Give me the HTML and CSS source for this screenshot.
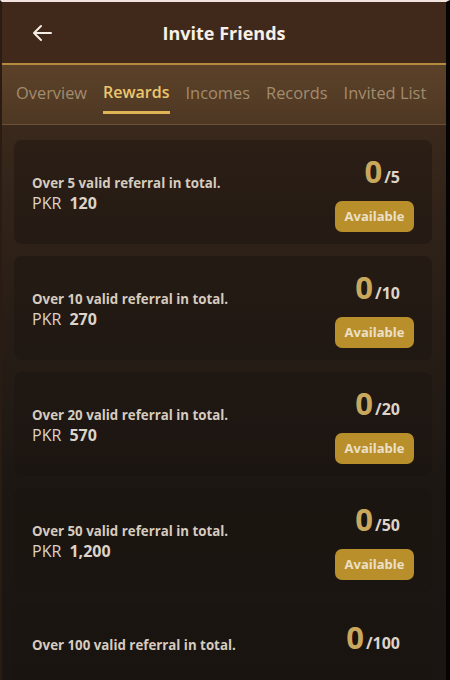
FILE: index.html
```html
<!DOCTYPE html>
<html lang="en">
<head>
    <meta charset="UTF-8">
    <meta name="viewport" content="width=device-width, initial-scale=1.0">
    <title>Invite Friends</title>
    <link rel="stylesheet" href="styles.css">
</head>
<body>
    <div class="phone">
        <header class="topbar">
            <a class="back" href="#">
                <svg width="20" height="18" viewBox="0 0 20 18" fill="none" stroke="#f4ede4" stroke-width="2" stroke-linecap="round" stroke-linejoin="round">
                    <path d="M19 9H2M9 2L2 9l7 7"/>
                </svg>
            </a>
            <h1>Invite Friends</h1>
        </header>

        <nav class="tabs">
            <a href="#">Overview</a>
            <a href="#" class="active">Rewards</a>
            <a href="#">Incomes</a>
            <a href="#">Records</a>
            <a href="#">Invited List</a>
        </nav>

        <main class="list">
            <div class="card">
                <div class="info">
                    <p class="task">Over 5 valid referral in total.</p>
                    <p class="prize">PKR <b>120</b></p>
                </div>
                <div class="side">
                    <p class="count"><span>0</span>/5</p>
                    <button class="btn">Available</button>
                </div>
            </div>
            <div class="card">
                <div class="info">
                    <p class="task">Over 10 valid referral in total.</p>
                    <p class="prize">PKR <b>270</b></p>
                </div>
                <div class="side">
                    <p class="count"><span>0</span>/10</p>
                    <button class="btn">Available</button>
                </div>
            </div>
            <div class="card">
                <div class="info">
                    <p class="task">Over 20 valid referral in total.</p>
                    <p class="prize">PKR <b>570</b></p>
                </div>
                <div class="side">
                    <p class="count"><span>0</span>/20</p>
                    <button class="btn">Available</button>
                </div>
            </div>
            <div class="card">
                <div class="info">
                    <p class="task">Over 50 valid referral in total.</p>
                    <p class="prize">PKR <b>1,200</b></p>
                </div>
                <div class="side">
                    <p class="count"><span>0</span>/50</p>
                    <button class="btn">Available</button>
                </div>
            </div>
            <div class="card last">
                <div class="info">
                    <p class="task">Over 100 valid referral in total.</p>
                </div>
                <div class="side">
                    <p class="count"><span>0</span>/100</p>
                </div>
            </div>
        </main>
    </div>
</body>
</html>
```

FILE: styles.css
```css
body {
    margin: 0;
    padding: 0;
    background-color: #000;
    font-family: "Open Sans", "Noto Sans", sans-serif;
    overflow: hidden;
}

.phone {
    width: 444px;
    height: 678px;
    border-top: 2px solid #f2e2e0;
    border-left: 2px solid #2a1c12;
    border-right: 4px solid #050403;
    background: linear-gradient(to bottom, #46301f 0%, #2e2118 35%, #1d1713 70%, #1a1512 100%);
    overflow: hidden;
}

.topbar {
    height: 61px;
    display: flex;
    align-items: center;
    justify-content: center;
    position: relative;
    background-color: #40291b;
    border-bottom: 2px solid #b48a3c;
}

.back {
    position: absolute;
    left: 30px;
    top: 22px;
}

.topbar h1 {
    margin: 0;
    color: #f6f0e8;
    font-size: 18px;
    font-weight: 700;
}

.tabs {
    height: 60px;
    display: flex;
    align-items: flex-start;
    padding: 16px 0 0 14px;
    gap: 16px;
    box-sizing: border-box;
    background: linear-gradient(to bottom, #5c4129, #4e3823);
    border-bottom: 1px solid #6a5034;
}

.tabs a {
    color: #a38c6e;
    text-decoration: none;
    font-size: 16.4px;
    padding-bottom: 8px;
    border-bottom: 3px solid transparent;
}

.tabs a.active {
    color: #ebc66d;
    font-weight: 600;
    font-size: 16px;
    border-bottom-color: #e0b454;
}

.list {
    padding: 15px 14px 0 12px;
    display: flex;
    flex-direction: column;
    gap: 12px;
}

.card {
    height: 104px;
    flex-shrink: 0;
    border-radius: 8px;
    background-color: rgba(26, 20, 16, 0.45);
    display: flex;
    justify-content: space-between;
    align-items: center;
    padding: 0 18px 0 18px;
}

.card.last {
    align-items: flex-start;
    padding-top: 15px;
    box-sizing: border-box;
}

.card.last .task {
    margin-top: 17px !important;
}

.info p {
    margin: 0;
}

.task {
    color: #d6cbbf;
    font-size: 13.3px;
    font-weight: 700;
    margin-top: 3px !important;
}

.prize {
    color: #ddd3c8;
    font-size: 16px;
    margin-top: 0 !important;
}

.prize b {
    margin-left: 4px;
}

.side {
    display: flex;
    flex-direction: column;
    align-items: flex-end;
}

.count {
    margin: 0 14px 0 0;
    color: #ddd3c8;
    font-size: 16px;
    font-weight: 700;
    line-height: 36px;
}

.count span {
    color: #c9a85e;
    font-size: 31px;
    margin-right: 2px;
}

.btn {
    margin-top: 6px;
    background-color: #b98f2c;
    color: #ebe0c8;
    border: none;
    border-radius: 7px;
    font-family: inherit;
    font-size: 13px;
    font-weight: 700;
    width: 79px;
    height: 31px;
    padding: 0;
}
```
